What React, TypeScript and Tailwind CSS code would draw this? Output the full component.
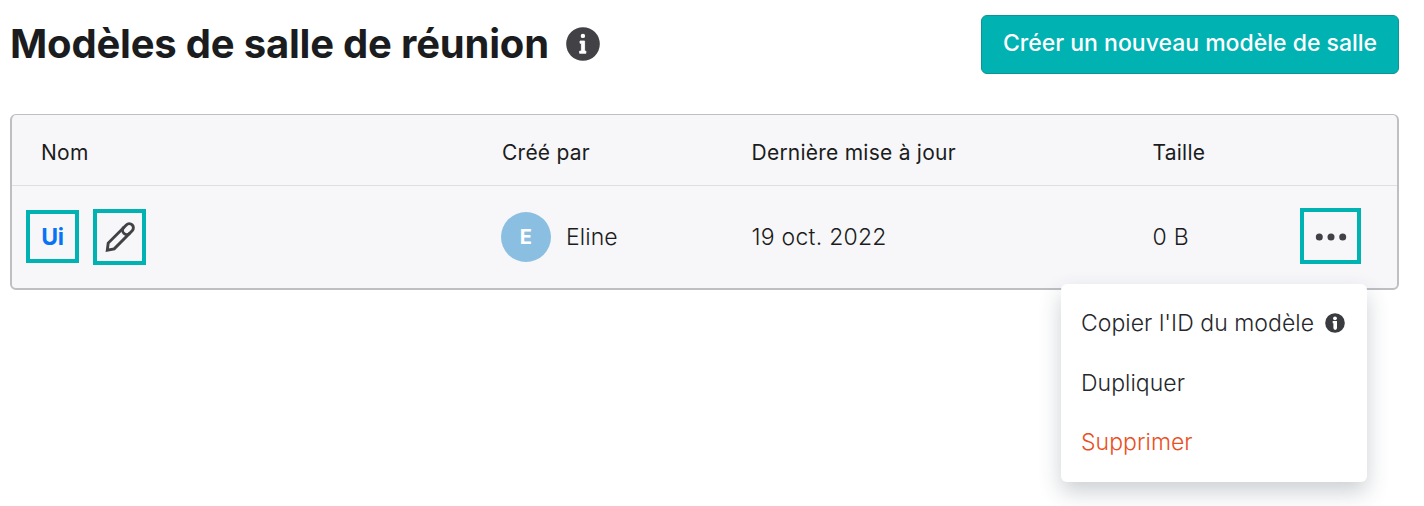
import type { ReactNode } from "react";

type RoomTemplate = {
  name: string;
  author: string;
  updatedAt: string;
  size: string;
};

const templates: RoomTemplate[] = [
  { name: "Ui", author: "Eline", updatedAt: "19 oct. 2022", size: "0 B" },
];

const GRID = "grid grid-cols-[489px_250.5px_401px_1fr] items-center";

function InfoIcon() {
  return (
    <svg width="34" height="34" viewBox="0 0 34 34" className="shrink-0">
      <circle cx="17" cy="17" r="16.8" fill="#414146" />
      <circle cx="16.9" cy="8.9" r="2.2" fill="#fff" />
      <path
        d="M14 14h4.6v10.1h1.3v2.2h-6.3v-2.2h1.8v-7.8H14z"
        fill="#fff"
        stroke="#fff"
        strokeWidth="0.8"
        strokeLinejoin="round"
      />
    </svg>
  );
}

function SmallInfoIcon() {
  return (
    <svg width="20" height="20" viewBox="0 0 20 20" className="shrink-0">
      <circle cx="10" cy="10" r="9.8" fill="#3a3b3f" />
      <circle cx="10" cy="5.3" r="1.9" fill="#fff" />
      <path d="M7.7 8.1h4.3v7a1.8 1.8 0 0 1-3.6 0V10.2h-.7z" fill="#fff" />
    </svg>
  );
}

function PencilIcon() {
  return (
    <svg
      width="32"
      height="32"
      viewBox="0 0 32 32"
      fill="none"
      stroke="#414146"
      strokeWidth="2.9"
      strokeLinejoin="miter"
    >
      <path d="M3.3 29.1 4.2 22.1 22.3 3.9a4.1 4.1 0 0 1 5.9 5.8L10.2 27.8z" />
      <path d="M19.8 6.4a4.1 4.1 0 0 0 5.9 5.9" />
    </svg>
  );
}

function DotsIcon() {
  return (
    <svg width="32" height="8" viewBox="0 0 32 8" fill="#414146">
      <circle cx="4.3" cy="4" r="3.5" />
      <circle cx="16" cy="4" r="3.5" />
      <circle cx="27.7" cy="4" r="3.5" />
    </svg>
  );
}

function MenuItem({ children, danger }: { children: ReactNode; danger?: boolean }) {
  return (
    <button
      className={`flex h-[59.5px] w-full items-center gap-[11px] pl-5 text-left whitespace-nowrap ${
        danger ? "text-[#ea501f]" : "text-[#26272c]"
      }`}
    >
      {children}
    </button>
  );
}

function RowMenu() {
  return (
    <div className="absolute top-[76px] -left-[239px] z-10 h-[198px] w-[306px] rounded-md bg-white pt-[9.5px] text-[23px] font-light tracking-[0.04px] shadow-[0_10px_22px_rgba(40,60,75,0.24)]">
      <MenuItem>
        Copier l'ID du modèle
        <SmallInfoIcon />
      </MenuItem>
      <MenuItem>Dupliquer</MenuItem>
      <MenuItem danger>Supprimer</MenuItem>
    </div>
  );
}

export default function App() {
  return (
    <main className="h-[506px] overflow-hidden bg-white pt-[15px] pr-[25px] pl-[10px] font-['Inter',sans-serif] text-[#1b1c20]">
      <header className="flex h-[59px] items-center justify-between">
        <div className="flex items-center gap-[17px] pb-[2px]">
          <h1 className="text-[40px] leading-none font-bold tracking-[-0.2px] whitespace-nowrap">
            Modèles de salle de réunion
          </h1>
          <InfoIcon />
        </div>
        <button className="h-[59px] w-[418px] rounded-md border border-[#0d9494] bg-[#00b2b2] pb-[3px] text-[23px] font-medium whitespace-nowrap text-white">
          Créer un nouveau modèle de salle
        </button>
      </header>

      <section className="mt-10 h-[176px] rounded-md border-2 border-t border-[#bebec3] bg-[#f7f7fa]">
        <div
          className={`${GRID} h-[71px] border-b border-[#dedfe2] pt-[6px] text-[21px] tracking-[0.24px]`}
        >
          <span className="pl-[29px]">Nom</span>
          <span className="pl-px">Créé par</span>
          <span>Dernière mise à jour</span>
          <span>Taille</span>
        </div>

        {templates.map((template) => (
          <div
            key={template.name}
            className={`${GRID} h-[102px] text-[23px] font-light tracking-[0.25px]`}
          >
            <div className="flex items-center gap-[14px] pl-[14px]">
              <a className="mb-[2px] flex h-[53px] w-[53px] items-center justify-center border-4 border-[#00b2b2] pt-[2px] font-bold tracking-[-0.3px] text-[#0874f5]">
                {template.name}
              </a>
              <button className="flex h-14 w-[53px] items-center justify-center border-4 border-[#00b2b2]">
                <PencilIcon />
              </button>
            </div>
            <div className="flex items-center gap-[15px]">
              <span className="flex h-[50px] w-[50px] items-center justify-center rounded-full bg-[#8bbfe2] text-xl font-bold text-white">
                {template.author[0]}
              </span>
              <span className="tracking-[0.1px]">{template.author}</span>
            </div>
            <span>{template.updatedAt}</span>
            <div className="flex items-center justify-between pr-9">
              <span>{template.size}</span>
              <div className="relative mb-[2px]">
                <button className="flex h-14 w-[61px] items-center justify-center border-4 border-[#00b2b2] pt-[2px]">
                  <DotsIcon />
                </button>
                <RowMenu />
              </div>
            </div>
          </div>
        ))}
      </section>
    </main>
  );
}
